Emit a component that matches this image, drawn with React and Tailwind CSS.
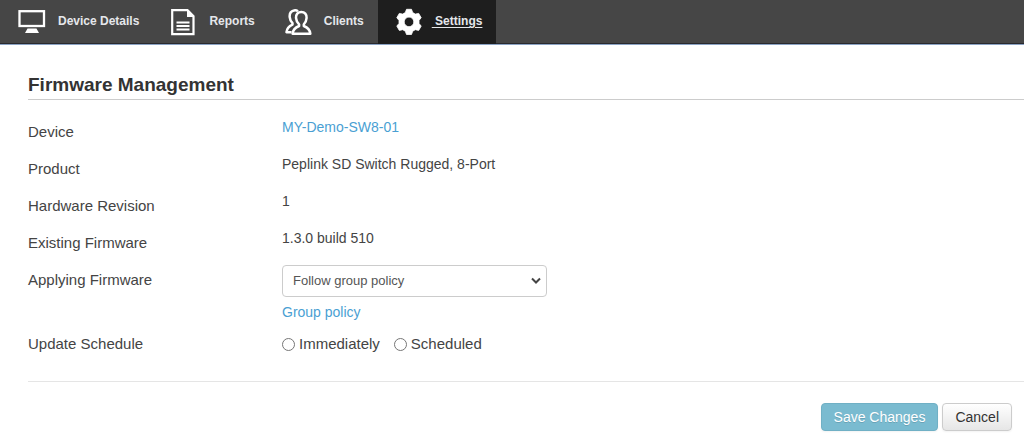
import React from "react";

function MonitorIcon() {
  return (
    <svg width="28" height="24" viewBox="0 0 28 24" aria-hidden="true">
      <rect x="1.500" y="1.200" width="24.500" height="14.800" fill="none" stroke="#fff" strokeWidth="2.300" />
      <path d="M9.500 18.500h9l2.500 4.500h-14z" fill="#fff" />
    </svg>
  );
}

function ReportIcon() {
  return (
    <svg width="24" height="27" viewBox="0 0 24 27" aria-hidden="true">
      <path d="M1.200 1.200H16.500l6 6V25.200H1.200z" fill="none" stroke="#fff" strokeWidth="2.200" />
      <path d="M16 1l7 7h-7z" fill="#fff" />
      <path d="M5.500 13.500h13M5.500 17h13M5.500 20.500h13" stroke="#fff" strokeWidth="1.900" />
    </svg>
  );
}

function ClientsIcon() {
  return (
    <svg width="27" height="27" viewBox="0 0 27 27" aria-hidden="true" fill="none" stroke="#fff" strokeWidth="2.500" strokeLinejoin="round">
      <path d="M13 2.200C11.800 1.400 10.300 1.100 8.900 1.500 5.700 2.300 4.400 5 4.700 8.200c.2 2.600 1.200 4.400 2.800 6v1.400c-3.300 1.400-5.600 3.200-6 7.600h5" />
      <path d="M16.300 2.900c-3.500 0-5.500 2.600-5.300 6 .2 2.700 1.400 4.900 3.100 6.500v1.600c-3.600 1.500-6.100 3.200-6.500 7.700h17.700c-.4-4.500-2.900-6.200-6.500-7.700v-1.600c1.700-1.600 2.600-3.800 2.800-6.500.2-3.400-1.800-6-5.300-6z" />
    </svg>
  );
}

function GearIcon() {
  return (
    <svg width="26" height="28" viewBox="0 0 26 28" aria-hidden="true">
      <path
        d="M10.500 1.300h5l1.200 3.300 2.600 1.500 3.400-.7 2.500 4.300-2.200 2.700v3l2.200 2.700-2.500 4.300-3.400-.7-2.600 1.500-1.200 3.300h-5l-1.200-3.300-2.600-1.500-3.400.7L.8 18.100 3 15.400v-3L.8 9.700l2.500-4.300 3.400.7 2.600-1.500zM13 9.100a4.800 4.800 0 1 0 0 9.600 4.800 4.800 0 0 0 0-9.600z"
        fill="#fff"
        fillRule="evenodd"
        stroke="#fff"
        strokeWidth=".8"
        strokeLinejoin="round"
      />
    </svg>
  );
}

function NavItem({ icon, label, className }) {
  return (
    <a href="#" className={"flex items-center text-xs font-bold text-gray-200 " + className}>
      {icon}
      <span className="pb-0.5">{label}</span>
    </a>
  );
}

function Row({ label, htmlFor, children }) {
  return (
    <div className="grid min-h-[37px] grid-cols-[254px_1fr]">
      <div className="pt-[5px] text-[15px] leading-5">
        {htmlFor ? <label htmlFor={htmlFor}>{label}</label> : label}
      </div>
      <div className="text-sm leading-5">{children}</div>
    </div>
  );
}

const radio = "size-[13px] appearance-none rounded-full border border-[#767676] bg-white checked:border-4 checked:border-[#0075ff]";

export default function App() {
  return (
    <div className="bg-white font-['Liberation_Sans',Arial,sans-serif] text-[#444]">
      <nav className="flex h-[45px] border-b border-[#8ba3c4] bg-[#464646] shadow-[inset_0_-1px_0_#2a2a2e]">
        <NavItem icon={<MonitorIcon />} label="Device Details" className="gap-3 pl-[18px]" />
        <NavItem icon={<ReportIcon />} label="Reports" className="gap-3.5 pl-8" />
        <NavItem icon={<ClientsIcon />} label="Clients" className="gap-3 pr-3.5 pl-[30px]" />
        <NavItem
          icon={<GearIcon />}
          label={<span className="whitespace-pre underline underline-offset-2"> Settings</span>}
          className="gap-2.5 bg-[#1e1e1e] pr-3.5 pl-[18px]"
        />
      </nav>
      <main className="pt-7 pl-7">
        <h1 className="border-b border-[#ccc] pb-0.5 text-[19px] leading-6 font-bold text-[#333]">Firmware Management</h1>
        <form className="pt-[17px]" onSubmit={(e) => e.preventDefault()}>
          <Row label="Device">
            <a href="#" className="text-[#4a9fd3]">MY-Demo-SW8-01</a>
          </Row>
          <Row label="Product">Peplink SD Switch Rugged, 8-Port</Row>
          <Row label="Hardware Revision">1</Row>
          <Row label="Existing Firmware">1.3.0 build 510</Row>
          <Row label="Applying Firmware" htmlFor="firmware">
            <div className="relative w-[265px]">
              <select id="firmware" className="block h-8 w-full appearance-none rounded border border-[#ccc] bg-white px-2.5 text-[13px] text-[#555]">
                <option>Follow group policy</option>
              </select>
              <svg className="pointer-events-none absolute top-3 right-1.5" width="10" height="8" viewBox="0 0 10 8" aria-hidden="true">
                <path d="M1 1.500l4 4 4-4" fill="none" stroke="#444" strokeWidth="2" />
              </svg>
            </div>
            <a href="#" className="mt-[5px] block text-[#4a9fd3]">Group policy</a>
          </Row>
          <div className="pt-[7px]">
            <Row label="Update Schedule">
              <div role="radiogroup" aria-label="Update Schedule" className="flex gap-3.5 pt-[5px] text-[15px]">
                <label className="flex items-center gap-1">
                  <input type="radio" name="schedule" className={radio} />
                  Immediately
                </label>
                <label className="flex items-center gap-1">
                  <input type="radio" name="schedule" className={radio} />
                  Scheduled
                </label>
              </div>
            </Row>
          </div>
          <div className="mt-[15px] flex justify-end gap-1 border-t border-[#e5e5e5] pt-[21px] pr-3 pb-2 text-sm">
            <button type="submit" className="h-7 rounded border border-[#70b0c5] bg-[#7abbd0] px-3 text-white shadow-xs text-shadow-2xs">Save Changes</button>
            <button type="button" className="h-7 rounded border border-[#ccc] bg-linear-to-b from-white to-[#e6e6e6] px-3 text-[#333] shadow-xs">Cancel</button>
          </div>
        </form>
      </main>
    </div>
  );
}
